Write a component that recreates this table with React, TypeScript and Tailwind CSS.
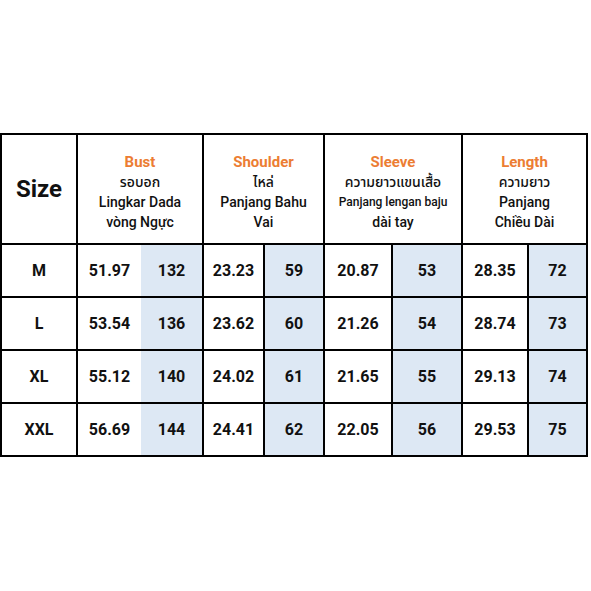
import React from "react";

const rows = [
  ["M", "51.97", "132", "23.23", "59", "20.87", "53", "28.35", "72"],
  ["L", "53.54", "136", "23.62", "60", "21.26", "54", "28.74", "73"],
  ["XL", "55.12", "140", "24.02", "61", "21.65", "55", "29.13", "74"],
  ["XXL", "56.69", "144", "24.41", "62", "22.05", "56", "29.53", "75"],
];

export default function App() {
  return (
    <div
      className="w-[591px] h-[591px] bg-white pt-[133px]"
      style={{ fontFamily: "Roboto, 'Noto Sans', 'Noto Sans Thai', sans-serif" }}
    >
      <div className="grid grid-cols-[76px_63px_63px_61px_60px_68px_70px_66px_59px] grid-rows-[110px_53px_53px_53px_53px] border-t-2 border-l-2 border-black w-[588px] text-[#111]">
        <div className="border-r-2 border-b-2 border-black flex items-center justify-center text-[24px] font-bold">
          Size
        </div>
        <div className="col-span-2 border-r-2 border-b-2 border-black flex flex-col items-center justify-center text-[14px] font-medium leading-[20px] pt-[6px]">
          <div className="text-[#ec7d33] text-[15px] font-bold">Bust</div>
          <div>รอบอก</div>
          <div>Lingkar Dada</div>
          <div>vòng Ngực</div>
        </div>
        <div className="col-span-2 border-r-2 border-b-2 border-black flex flex-col items-center justify-center text-[14px] font-medium leading-[20px] pt-[6px]">
          <div className="text-[#ec7d33] text-[15px] font-bold">Shoulder</div>
          <div>ไหล่</div>
          <div>Panjang Bahu</div>
          <div>Vai</div>
        </div>
        <div className="col-span-2 border-r-2 border-b-2 border-black flex flex-col items-center justify-center text-[14px] font-medium leading-[20px] pt-[6px]">
          <div className="text-[#ec7d33] text-[15px] font-bold">Sleeve</div>
          <div>ความยาวแขนเสื้อ</div>
          <div className="text-[12px]">Panjang lengan baju</div>
          <div>dài tay</div>
        </div>
        <div className="col-span-2 border-r-2 border-b-2 border-black flex flex-col items-center justify-center text-[14px] font-medium leading-[20px] pt-[6px]">
          <div className="text-[#ec7d33] text-[15px] font-bold">Length</div>
          <div>ความยาว</div>
          <div>Panjang</div>
          <div>Chiều Dài</div>
        </div>
        {rows.map((r) =>
          r.map((v, i) => {
            const blue = i > 0 && i % 2 === 0;
            const cls =
              "border-b-2 border-black flex items-center justify-center text-[16px] font-bold " +
              (blue ? "bg-[#dde8f4] border-r-2 " : "") +
              (i === 0 ? "border-r-2 " : "") +
              (i === 3 || i === 5 || i === 7 ? "border-r-2 " : "");
            return (
              <div key={r[0] + i} className={cls}>
                {v}
              </div>
            );
          })
        )}
      </div>
    </div>
  );
}
